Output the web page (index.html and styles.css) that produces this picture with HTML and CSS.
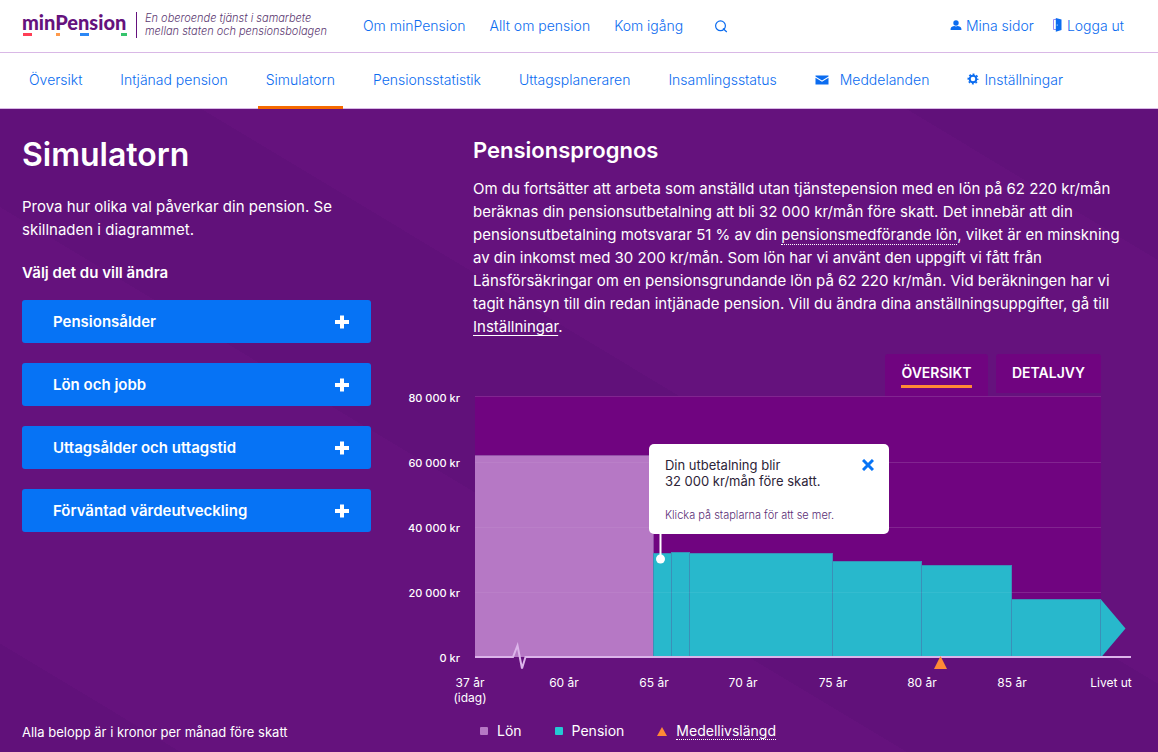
FILE: index.html
```html
<!DOCTYPE html>
<html lang="sv">
<head>
<meta charset="utf-8">
<meta name="viewport" content="width=device-width, initial-scale=1">
<title>Simulatorn - minPension</title>
<link rel="stylesheet" href="styles.css">
</head>
<body>
<header class="topbar">
  <a class="logo" href="#">
    <span class="logo-word">minPension</span>
    <svg class="logo-marks" viewBox="0 0 106 3" aria-hidden="true">
      <rect x="1" width="9" height="3" fill="#ff3e55"/>
      <rect x="34" width="4" height="3" fill="#ff9a4a"/>
      <rect x="58" width="9" height="3" fill="#2b87f5"/>
      <rect x="99" width="6" height="3" fill="#35c46c"/>
    </svg>
  </a>
  <p class="tagline">En oberoende tjänst i samarbete<br>mellan staten och pensionsbolagen</p>
  <nav class="site-nav" aria-label="Webbplats">
    <a href="#">Om minPension</a>
    <a href="#">Allt om pension</a>
    <a href="#">Kom igång</a>
    <button class="search" type="button" aria-label="Sök">
      <svg width="14" height="14" viewBox="0 0 14 14" fill="none" stroke="currentColor" stroke-width="1.2"><circle cx="6.500" cy="6.800" r="4.900"/><path d="M9 9.500 12.800 13"/></svg>
    </button>
  </nav>
  <nav class="user-nav" aria-label="Konto">
    <a href="#"><svg width="12" height="12" viewBox="0 0 12 12" fill="currentColor"><circle cx="6" cy="3" r="2.700"/><path d="M.6 10V8.700C.8 7.100 2.800 6.500 4.400 6.100Q6 6.900 7.600 6.100C9.200 6.500 11.200 7.100 11.400 8.700V10Z"/></svg>Mina sidor</a>
    <a href="#"><svg width="11" height="16" viewBox="0 0 11 16"><path d="M4 1.500H1.500V11.500H4" fill="none" stroke="#9a8cf5"/><path d="M3.800 0 9.500 1.500V12L3.800 13.800Z" fill="currentColor"/><circle cx="5.200" cy="7" r=".6" fill="#fff"/></svg>Logga ut</a>
  </nav>
</header>
<nav class="tabs-nav" aria-label="Mina sidor">
  <a href="#">Översikt</a>
  <a href="#">Intjänad pension</a>
  <a class="current" href="#" aria-current="page">Simulatorn</a>
  <a href="#">Pensionsstatistik</a>
  <a href="#">Uttagsplaneraren</a>
  <a href="#">Insamlingsstatus</a>
  <a class="messages" href="#"><svg width="14" height="10" viewBox="0 0 14 10" fill="currentColor"><path d="M.5.500H13.500V1.400L7 5.400.500 1.400Z"/><path d="M.5 2.700 7 6.700 13.500 2.700V9.500H.500Z"/></svg>Meddelanden</a>
  <a class="settings" href="#"><svg width="12" height="14" viewBox="0 0 12 14" fill="none" stroke="currentColor"><circle cx="6" cy="6" r="3.300" stroke-width="2"/><circle cx="6" cy="6" r="4.700" stroke-width="1.600" stroke-dasharray="1.900 1.791" stroke-dashoffset=".95"/></svg>Inställningar</a>
</nav>
<main class="simulator">
  <section class="controls">
    <h1>Simulatorn</h1>
    <p class="intro">Prova hur olika val påverkar din pension. Se skillnaden i diagrammet.</p>
    <h2 class="choose">Välj det du vill ändra</h2>
    <div class="options">
      <button type="button">Pensionsålder<svg width="14" height="14" viewBox="0 0 14 14"><path d="M7 .5V13.500M0 7H14" stroke="#fff" stroke-width="4"/></svg></button>
      <button type="button">Lön och jobb<svg width="14" height="14" viewBox="0 0 14 14"><path d="M7 .5V13.500M0 7H14" stroke="#fff" stroke-width="4"/></svg></button>
      <button type="button">Uttagsålder och uttagstid<svg width="14" height="14" viewBox="0 0 14 14"><path d="M7 .5V13.500M0 7H14" stroke="#fff" stroke-width="4"/></svg></button>
      <button type="button">Förväntad värdeutveckling<svg width="14" height="14" viewBox="0 0 14 14"><path d="M7 .5V13.500M0 7H14" stroke="#fff" stroke-width="4"/></svg></button>
    </div>
    <p class="footnote">Alla belopp är i kronor per månad före skatt</p>
  </section>
  <section class="forecast">
    <div class="summary">
      <h2>Pensionsprognos</h2>
      <p>Om du fortsätter att arbeta som anställd utan tjänstepension med en lön på 62 220 kr/mån<br>beräknas din pensionsutbetalning att bli 32 000 kr/mån före skatt. Det innebär att din<br>pensionsutbetalning motsvarar 51 % av din <a class="term" href="#">pensionsmedförande lön</a>, vilket är en minskning<br>av din inkomst med 30 200 kr/mån. Som lön har vi använt den uppgift vi fått från<br>Länsförsäkringar om en pensionsgrundande lön på 62 220 kr/mån. Vid beräkningen har vi<br>tagit hänsyn till din redan intjänade pension. Vill du ändra dina anställningsuppgifter, gå till<br><a href="#">Inställningar</a>.</p>
    </div>
    <div class="view-tabs">
      <button class="active" type="button"><span>ÖVERSIKT</span></button>
      <button type="button"><span>DETALJVY</span></button>
    </div>
    <div class="chart">
      <svg class="plot" viewBox="0 0 721 312" role="img" aria-label="Lön och pension per ålder">
        <rect x="64" y="0" width="626" height="261" fill="#700480"/>
        <rect x="64" y="60" width="178" height="201" fill="#b678c5"/>
        <path d="M64 59.500H242.500V157" fill="none" stroke="#9350a8"/>
        <g fill="#28b8cc" stroke="#3a90b8">
          <path d="M690 203.500 714.500 232.500 690 261.500Z" stroke="none"/>
          <rect x="242.500" y="157.500" width="18" height="104"/>
          <rect x="260.500" y="156.500" width="18" height="105"/>
          <rect x="278.500" y="157.500" width="143" height="104"/>
          <rect x="421.500" y="165.500" width="89" height="96"/>
          <rect x="510.500" y="169.500" width="90" height="92"/>
          <rect x="600.500" y="203.500" width="89" height="58"/>
        </g>
        <g fill="none" stroke="#fff">
          <path d="M64 .5H690M242 66.500H690M242 131.500H690M601 196.500H690" stroke-opacity=".13"/>
          <path d="M64 66.500H242M64 131.500H242M64 196.500H601" stroke-opacity=".06"/>
        </g>
        <path d="M64 261H102L106.500 249.500 111 272.500 114.500 261H720" fill="none" stroke="#dcb4ea" stroke-width="2"/>
        <path d="M529.500 260 536 273H523Z" fill="#ff8a35"/>
        <path d="M249.500 137V163" stroke="#fff" stroke-width="2"/>
        <circle cx="249.500" cy="163" r="4.500" fill="#fff"/>
        <g class="y-labels">
          <text x="49" y="6">80 000 kr</text>
          <text x="49" y="71">60 000 kr</text>
          <text x="49" y="136">40 000 kr</text>
          <text x="49" y="201">20 000 kr</text>
          <text x="49" y="266">0 kr</text>
        </g>
        <g class="x-labels">
          <text x="59" y="291">37 år</text>
          <text x="59" y="306">(idag)</text>
          <text x="153" y="291">60 år</text>
          <text x="243" y="291">65 år</text>
          <text x="332" y="291">70 år</text>
          <text x="422" y="291">75 år</text>
          <text x="511" y="291">80 år</text>
          <text x="601" y="291">85 år</text>
          <text x="700" y="291">Livet ut</text>
        </g>
      </svg>
      <div class="tooltip" role="status">
        <p>Din utbetalning blir<br>32 000 kr/mån före skatt.</p>
        <p class="hint">Klicka på staplarna för att se mer.</p>
        <button type="button" aria-label="Stäng"><svg width="12" height="12" viewBox="0 0 12 12"><path d="M1 1 11 11M11 1 1 11" stroke="#0673f5" stroke-width="3"/></svg></button>
      </div>
    </div>
    <ul class="legend">
      <li><span class="swatch salary"></span>Lön</li>
      <li><span class="swatch pension"></span>Pension</li>
      <li><svg width="10" height="9" viewBox="0 0 10 9"><path d="M5 0 10 9H0Z" fill="#ff8a35"/></svg><a class="term" href="#">Medellivslängd</a></li>
    </ul>
  </section>
</main>
</body>
</html>
```
FILE: styles.css
```css
* { box-sizing: border-box; }
body {
  margin: 0;
  min-height: 100vh;
  display: flex;
  flex-direction: column;
  background: #fff;
  color: #fff;
  font-family: Inter, "Liberation Sans", sans-serif;
  font-size: 15px;
  line-height: 23px;
}
h1, h2, p, ul { margin: 0; padding: 0; }
a { color: inherit; }
button { font: inherit; color: inherit; border: 0; background: none; padding: 0; cursor: pointer; }
svg { display: block; flex: none; }

.topbar {
  display: flex;
  align-items: center;
  height: 53px;
  padding: 0 34px 1px 22px;
  border-bottom: 1px solid #d9b8e6;
  color: #0b6cf0;
  font-size: 14px;
  font-weight: 300;
}
.topbar a, .tabs-nav a { text-decoration: none; white-space: nowrap; }
.logo { width: 106px; padding-bottom: 4px; color: #65127d; }
.logo-word { display: block; font: 900 20px/22px Lato, sans-serif; }
.logo-marks { width: 100%; }
.tagline {
  margin: 0 36px 2px 8px;
  padding: 0 0 0 8px;
  border-left: 1px solid #65127d;
  color: #5d3a72;
  font-size: 11px;
  font-style: italic;
  line-height: 13px;
  white-space: nowrap;
}
.site-nav, .user-nav { display: flex; align-items: center; gap: 24px; }
.search { margin-left: 7px; }
.user-nav { margin-left: auto; gap: 18px; }
.user-nav a { display: flex; align-items: center; gap: 4px; }

.tabs-nav {
  display: flex;
  gap: 22px;
  height: 56px;
  padding: 0 21px;
  border-bottom: 1px solid #d9b8e6;
  color: #0b6cf0;
  font-size: 14px;
  font-weight: 300;
}
.tabs-nav a { display: flex; align-items: center; padding: 0 8px; margin-bottom: -1px; border-bottom: 3px solid transparent; }
.tabs-nav .current { border-color: #f56a00; }
.tabs-nav .messages { gap: 11px; }
.tabs-nav .settings { gap: 5px; }

.simulator {
  flex: 1;
  display: grid;
  grid-template-columns: 349px minmax(0, 1fr);
  gap: 40px;
  padding: 24px 26px 8px 22px;
  background: linear-gradient(31deg, #61117a 93px, #65127d 93px 467px, #61117a 467px 655px, #65127d 655px 1018px, #61117a 1018px);
}
.controls { display: flex; flex-direction: column; }
h1 { font-size: 32px; font-weight: 600; line-height: 44px; }
.intro { margin-top: 18px; }
.choose { margin: 20px 0 16px; font-size: 15px; font-weight: 600; line-height: 23px; }
.options { display: grid; gap: 20px; }
.options button {
  display: flex;
  align-items: center;
  justify-content: space-between;
  height: 43px;
  padding: 0 22px 0 31px;
  border-radius: 3px;
  background: #0673f5;
  font-weight: 600;
}
.footnote { margin-top: auto; font-size: 13px; }

.summary { padding-left: 62px; }
.summary h2 { font-size: 22px; font-weight: 600; line-height: 34px; }
.summary p { margin-top: 10px; white-space: nowrap; }
.summary a { text-underline-offset: 3px; }
.summary .term, .legend .term { text-decoration: none; border-bottom: 1px dotted #fff; }

.view-tabs { display: flex; justify-content: flex-end; align-items: flex-start; gap: 8px; height: 42px; margin: 16px 31px 0 0; }
.view-tabs button {
  display: flex;
  justify-content: center;
  align-items: flex-start;
  min-width: 103px;
  height: 39px;
  padding: 7px 16px 0;
  border-radius: 3px 3px 0 0;
  background: #700480;
  font-size: 14px;
  font-weight: 600;
}
.view-tabs button.active { height: 42px; }
.view-tabs span { padding-bottom: 1px; border-bottom: 3px solid transparent; }
.view-tabs .active span { border-color: #ff8a35; }

.chart { position: relative; }
.plot { width: 100%; overflow: visible; }
.plot text { fill: #fff; }
.y-labels { font-size: 11px; font-weight: 500; text-anchor: end; }
.x-labels { font-size: 12px; text-anchor: middle; }
.tooltip {
  position: absolute;
  left: 33%;
  top: 48px;
  width: 240px;
  padding: 13px 16px 8px;
  border-radius: 5px;
  background: #fff;
  color: #2d2438;
  font-size: 13px;
  line-height: 16px;
}
.tooltip .hint { margin-top: 18px; padding-bottom: 3px; color: #5a2d75; font-size: 11px; font-weight: 300; }
.tooltip button { position: absolute; top: 15px; right: 15px; }

.legend { display: flex; align-items: center; margin: 13px 0 0 69px; list-style: none; font-size: 14px; line-height: 20px; gap: 33px; }
.legend li { display: flex; align-items: center; gap: 9px; }
.legend .term { line-height: 16px; }
.swatch { width: 8px; height: 8px; border-radius: 1px; }
.salary { background: #b678c5; }
.pension { background: #24c8d4; }
```
